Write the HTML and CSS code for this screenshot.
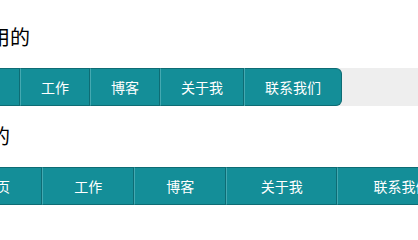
FILE: index.html
```html
<!DOCTYPE html>
<html lang="zh-CN">
<head>
<meta charset="utf-8">
<title>导航菜单</title>
<link rel="stylesheet" href="styles.css">
</head>
<body>
<div class="page">
  <h2 class="title first">浮动用的</h2>
  <ul class="nav-float">
    <li><a class="item first-item" href="#">首页</a></li>
    <li><a class="item" href="#">工作</a></li>
    <li><a class="item" href="#">博客</a></li>
    <li><a class="item" href="#">关于我</a></li>
    <li><a class="item last-item" href="#">联系我们</a></li>
  </ul>
  <h2 class="title">表格的</h2>
  <div class="nav-table">
    <a class="cell" href="#">首页</a>
    <a class="cell" href="#">工作</a>
    <a class="cell" href="#">博客</a>
    <a class="cell" href="#">关于我</a>
    <a class="cell" href="#">联系我们</a>
  </div>
</div>
</body>
</html>
```

FILE: styles.css
```css
html, body {
  margin: 0;
  padding: 0;
  background: #fff;
  overflow: hidden;
}

body {
  font-family: "Noto Sans CJK SC", "Noto Sans", sans-serif;
}

.page {
  width: 516px;
  margin-left: -50px;
  padding-top: 8px;
  display: flow-root;
}

.title {
  font-size: 20px;
  line-height: 24px;
  font-weight: normal;
  color: #000;
  margin: 18px 0 19px;
}

.title.first {
  margin-top: 17px;
}

.nav-float {
  list-style: none;
  margin: 0;
  padding: 0;
  display: flex;
  background: #eeeeee;
  border-radius: 6px;
}

.nav-float li {
  display: block;
}

.item,
.cell {
  display: block;
  font-size: 14px;
  line-height: 20px;
  padding: 8px 20px;
  color: #fff;
  text-decoration: none;
  text-align: center;
  white-space: nowrap;
  background: #148e98;
  border-top: 1px solid #0e6c74;
  border-bottom: 1px solid #0e6c74;
  border-left: 1px solid #44a9b1;
  border-right: 1px solid #0e6c74;
}

.first-item {
  border-radius: 6px 0 0 6px;
}

.last-item {
  border-radius: 0 6px 6px 0;
}

.nav-table {
  display: table;
  width: 100%;
  border-collapse: separate;
  border-spacing: 0;
}

.cell {
  display: table-cell;
}
```
